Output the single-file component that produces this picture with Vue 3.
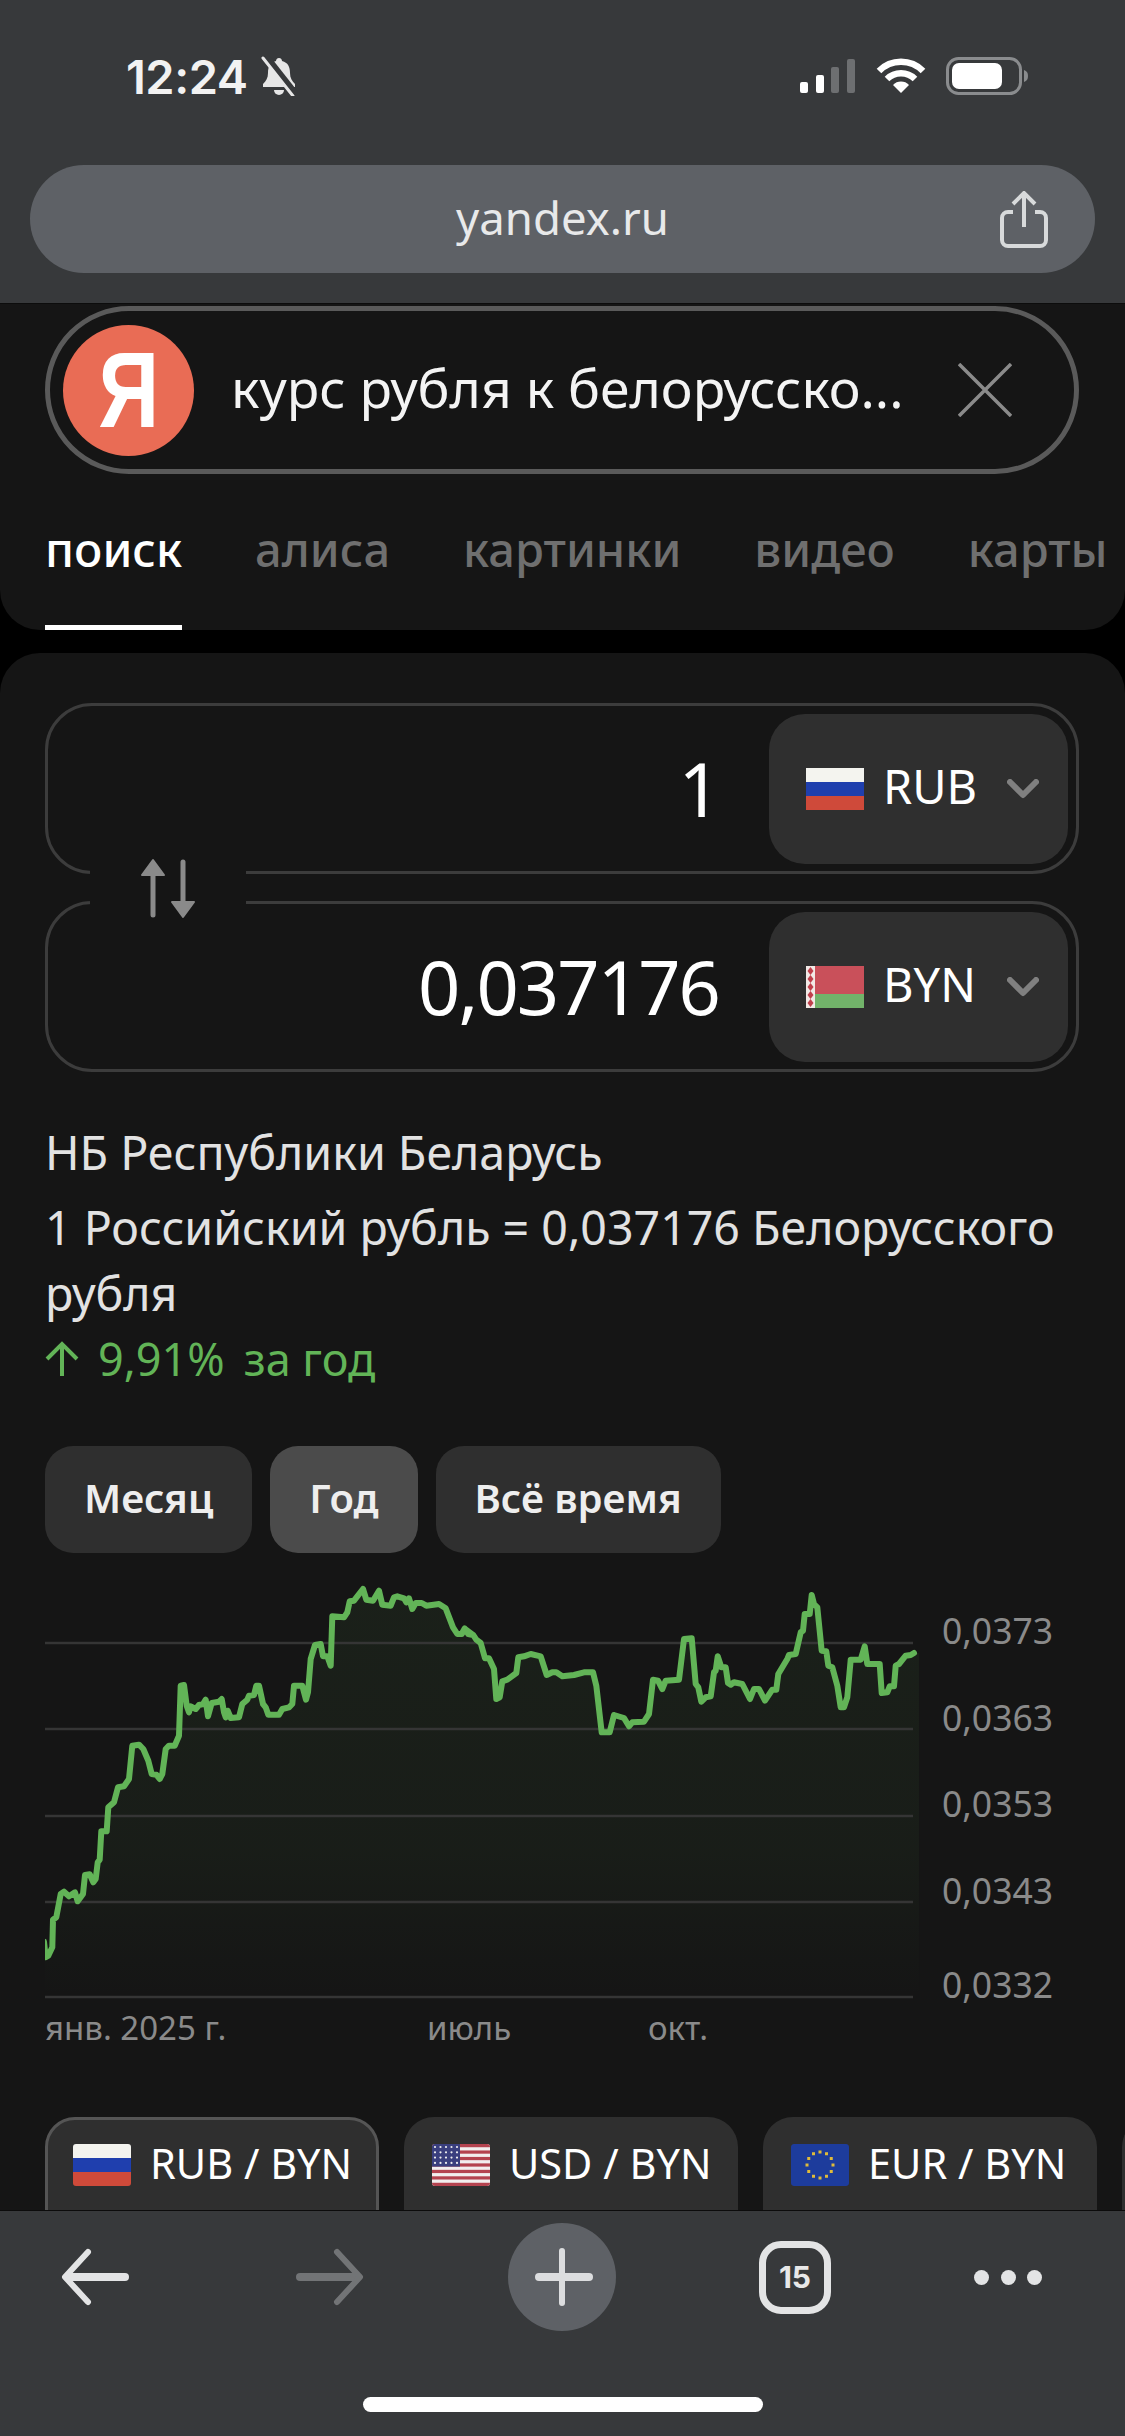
<template>
  <div class="phone">
    <header class="top-bar">
      <div class="status">
        <div class="status-left">
          <span class="time">12:24</span>
          <svg class="bell" width="38" height="40" viewBox="0 0 38 40">
            <path d="M19 2c2 0 3 1.500 3 3 6 1.500 8 6 8 12 0 5 2 8 5 11v3H3v-3c3-3 5-6 5-11 0-6 2-10.500 8-12 0-1.500 1-3 3-3z" fill="#e6e6e6" />
            <path d="M14 34a5 5 0 0 0 10 0z" fill="#e6e6e6" />
            <path d="M6 0l30 38" stroke="#37393b" stroke-width="6" />
            <path d="M3 2l30 38" stroke="#e6e6e6" stroke-width="3" stroke-linecap="round" />
          </svg>
        </div>
        <div class="status-right">
          <svg width="56" height="34" viewBox="0 0 56 34">
            <rect x="0" y="23" width="8" height="11" rx="2" fill="#fff" />
            <rect x="16" y="16" width="8" height="18" rx="2" fill="#fff" />
            <rect x="31" y="8" width="8" height="26" rx="2" fill="#6d6f71" />
            <rect x="47" y="0" width="8" height="34" rx="2" fill="#6d6f71" />
          </svg>
          <svg width="50" height="36" viewBox="0 0 50 36">
            <path d="M3 13a31 31 0 0 1 44 0" fill="none" stroke="#fff" stroke-width="6.500" />
            <path d="M11 21a20 20 0 0 1 28 0" fill="none" stroke="#fff" stroke-width="6.500" />
            <path d="M25 35l-8-8a11 11 0 0 1 16 0z" fill="#fff" />
          </svg>
          <svg width="82" height="38" viewBox="0 0 82 38">
            <rect x="1.500" y="1.500" width="73" height="35" rx="11" fill="none" stroke="#8a8c8e" stroke-width="3" />
            <rect x="6" y="6" width="50" height="26" rx="7" fill="#fff" />
            <path d="M78 13c3 1 4 3 4 6s-1 5-4 6z" fill="#8a8c8e" />
          </svg>
        </div>
      </div>
      <div class="url-pill">
        <span>yandex.ru</span>
        <svg class="share" width="50" height="58" viewBox="0 0 50 58">
          <path d="M14 21H9a6 6 0 0 0-6 6v22a6 6 0 0 0 6 6h32a6 6 0 0 0 6-6V27a6 6 0 0 0-6-6h-5" fill="none" stroke="#d8dadb" stroke-width="4" />
          <path d="M25 36V3M14 13L25 2l11 11" fill="none" stroke="#d8dadb" stroke-width="4" />
        </svg>
      </div>
    </header>

    <main class="content">
      <section class="search-card">
        <div class="search-box">
          <div class="logo"><span>Я</span></div>
          <div class="query">курс рубля к белорусско...</div>
          <svg width="54" height="54" viewBox="0 0 54 54">
            <path d="M1 1l52 52M53 1L1 53" stroke="#8a8a8a" stroke-width="3.500" />
          </svg>
        </div>
        <nav class="tabs">
          <a v-for="(t, i) in tabs" :key="t" class="tab" :class="{ active: i === 0 }">{{ t }}</a>
        </nav>
      </section>

      <section class="rate-card">
        <div class="converter">
          <div class="field">
            <span class="amount">1</span>
            <div class="select">
              <svg class="flag" width="58" height="42" viewBox="0 0 58 42">
                <rect width="58" height="14" fill="#f4f4ef" />
                <rect y="14" width="58" height="14" fill="#1f3fae" />
                <rect y="28" width="58" height="14" fill="#cf4a3a" />
              </svg>
              <span class="code">RUB</span>
              <svg class="chevron" width="32" height="20" viewBox="0 0 32 20">
                <path d="M3 3l13 13L29 3" fill="none" stroke="#808080" stroke-width="6" stroke-linecap="round" stroke-linejoin="round" />
              </svg>
            </div>
          </div>
          <div class="field">
            <span class="amount">0,037176</span>
            <div class="select">
              <svg class="flag" width="58" height="42" viewBox="0 0 58 42">
                <rect width="58" height="28" fill="#c9505a" />
                <rect y="28" width="58" height="14" fill="#72b36a" />
                <rect width="9" height="42" fill="#f2e9e6" />
                <path v-for="n in 5" :key="n" :d="'M4.500 ' + (n * 8 - 7) + 'l3 4-3 4-3-4z'" fill="#c0404c" />
              </svg>
              <span class="code">BYN</span>
              <svg class="chevron" width="32" height="20" viewBox="0 0 32 20">
                <path d="M3 3l13 13L29 3" fill="none" stroke="#808080" stroke-width="6" stroke-linecap="round" stroke-linejoin="round" />
              </svg>
            </div>
          </div>
          <!-- разрыв рамки под кнопкой обмена -->
          <div class="swap">
            <svg width="62" height="62" viewBox="0 0 62 62">
              <path d="M16 58V14" stroke="#8a8a8a" stroke-width="5" stroke-linecap="round" />
              <path d="M16 3L27 18H5z" fill="#8a8a8a" stroke="#8a8a8a" stroke-width="2" stroke-linejoin="round" />
              <path d="M46 5V48" stroke="#8a8a8a" stroke-width="5" stroke-linecap="round" />
              <path d="M46 60L35 45h22z" fill="#8a8a8a" stroke="#8a8a8a" stroke-width="2" stroke-linejoin="round" />
            </svg>
          </div>
        </div>

        <div class="info">
          <div class="source">НБ Республики Беларусь</div>
          <div>1 Российский рубль = 0,037176 Белорусского рубля</div>
          <div class="change">
            <svg width="34" height="36" viewBox="0 0 34 36">
              <path d="M17 35V3M2 18L17 3l15 15" fill="none" stroke="#62b457" stroke-width="4" />
            </svg>
            <span>9,91%</span>
            <span>за год</span>
          </div>
        </div>

        <div class="periods">
          <button v-for="p in periods" :key="p" class="period" :class="{ active: p === 'Год' }">{{ p }}</button>
        </div>

        <svg class="chart" width="1033" height="480" viewBox="46 0 1033 480">
          <defs>
            <linearGradient id="area" x1="0" y1="0" x2="0" y2="1">
              <stop offset="0" stop-color="#62b457" stop-opacity="0.07" />
              <stop offset="0.65" stop-color="#62b457" stop-opacity="0.05" />
              <stop offset="1" stop-color="#62b457" stop-opacity="0" />
            </linearGradient>
          </defs>
          <path :d="areaPath" fill="url(#area)" />
          <line v-for="y in gridLines" :key="y" x1="45" x2="914" :y1="y" :y2="y" stroke="#353535" stroke-width="2.500" />
          <polyline :points="linePoints" fill="none" stroke="#62b457" stroke-width="6" stroke-linejoin="round" stroke-linecap="round" />
          <text v-for="l in yLabels" :key="l.text" x="943" :y="l.y + 13" class="axis">{{ l.text }}</text>
          <text x="46" y="471" class="axis small">янв. 2025 г.</text>
          <text x="428" y="471" class="axis small">июль</text>
          <text x="649" y="471" class="axis small">окт.</text>
        </svg>

        <div class="pairs">
          <div class="pair selected">
            <svg class="flag" width="58" height="42" viewBox="0 0 58 42">
              <rect width="58" height="14" fill="#f4f4ef" />
              <rect y="14" width="58" height="14" fill="#1f3fae" />
              <rect y="28" width="58" height="14" fill="#cf4a3a" />
            </svg>
            <span>RUB / BYN</span>
          </div>
          <div class="pair">
            <svg class="flag" width="58" height="42" viewBox="0 0 58 42">
              <rect width="58" height="42" fill="#f2eeee" />
              <rect v-for="n in 7" :key="n" :y="(n - 1) * 6.460" width="58" height="3.230" fill="#b4434f" />
              <rect width="28" height="22.600" fill="#3a3f7e" />
              <circle v-for="(s, i) in usStars" :key="i" :cx="s[0]" :cy="s[1]" r="1.100" fill="#eee" />
            </svg>
            <span>USD / BYN</span>
          </div>
          <div class="pair">
            <svg class="flag" width="58" height="42" viewBox="0 0 58 42">
              <rect width="58" height="42" rx="2" fill="#1d3c9c" />
              <rect v-for="(s, i) in euStars" :key="i" :x="s[0] - 1.500" :y="s[1] - 1.500" width="3" height="3" fill="#e0bb3a" />
            </svg>
            <span>EUR / BYN</span>
          </div>
          <div class="pair"></div>
        </div>
      </section>
    </main>

    <footer class="bottom-bar">
      <div class="nav">
        <svg class="nav-item" width="108" height="108" viewBox="0 0 108 108">
          <path d="M83 54H26" stroke="#e3e4e5" stroke-width="8" stroke-linecap="round" />
          <path d="M46 29L23 54 46 79" fill="none" stroke="#e3e4e5" stroke-width="6" stroke-linecap="round" stroke-linejoin="round" />
        </svg>
        <svg class="nav-item" width="108" height="108" viewBox="0 0 108 108">
          <path d="M25 54H82" stroke="#727476" stroke-width="8" stroke-linecap="round" />
          <path d="M62 29L85 54 62 79" fill="none" stroke="#727476" stroke-width="6" stroke-linecap="round" stroke-linejoin="round" />
        </svg>
        <div class="plus">
          <svg width="108" height="108" viewBox="0 0 108 108">
            <path d="M31 54H81" stroke="#dcdddf" stroke-width="8" stroke-linecap="round" />
            <path d="M54 28V80" stroke="#dcdddf" stroke-width="6" stroke-linecap="round" />
          </svg>
        </div>
        <div class="nav-item tab-slot"><div class="tab-count">15</div></div>
        <div class="dots"><i></i><i></i><i></i></div>
      </div>
      <div class="home-indicator"></div>
    </footer>
  </div>
</template>

<script setup>
const tabs = ['поиск', 'алиса', 'картинки', 'видео', 'карты']
const periods = ['Месяц', 'Год', 'Всё время']

// точки графика сняты с увеличенных кропов (масштаб 3x)
const leftPart = [
  [135, 1118], [140, 1165], [148, 1160], [160, 1135], [162, 1052], [172, 1045], [185, 975], [195, 968], [210, 982],
  [228, 970], [236, 997], [252, 975], [258, 918], [272, 916], [283, 940], [290, 930], [296, 880], [302, 872],
  [307, 787], [323, 787], [328, 715], [345, 700], [357, 655], [375, 652], [390, 630], [400, 530], [420, 527],
  [433, 540], [448, 575], [458, 615], [472, 617], [482, 630], [490, 615], [500, 540], [510, 530], [527, 530],
  [540, 500], [545, 350], [555, 348], [563, 410], [570, 430], [575, 412], [590, 420], [600, 408], [612, 405],
  [620, 392], [627, 442], [638, 402], [660, 398], [668, 390], [675, 430], [680, 445], [686, 425], [695, 447],
  [720, 445], [730, 405], [745, 392], [750, 380], [765, 378], [772, 350], [780, 350], [792, 405], [800, 415],
  [808, 437], [840, 437], [850, 420], [870, 415], [880, 405], [885, 350], [910, 350], [921, 392], [927, 370],
  [935, 270], [948, 228], [965, 225], [972, 262], [985, 262], [995, 290], [1000, 142], [1035, 145], [1045, 130],
  [1052, 97], [1065, 95], [1092, 60], [1102, 92], [1122, 95], [1140, 65], [1150, 107], [1175, 110], [1185, 85],
  [1195, 82], [1215, 88], [1222, 100], [1230, 88], [1240, 120], [1250, 102], [1268, 102], [1282, 110], [1320, 105],
  [1340, 118], [1362, 175], [1375, 195], [1388, 195], [1397, 178], [1408, 195], [1422, 198],
]
const rightPart = [
  [18, 180], [28, 195], [42, 197], [52, 212], [65, 222], [78, 268], [90, 268], [105, 300], [112, 390], [122, 385],
  [130, 337], [145, 332], [172, 312], [178, 265], [195, 262], [215, 255], [245, 262], [263, 318], [280, 310],
  [292, 310], [310, 322], [345, 318], [375, 310], [402, 310], [412, 350], [428, 490], [452, 490], [465, 438],
  [495, 447], [510, 472], [520, 460], [555, 458], [570, 435], [582, 332], [597, 335], [610, 360], [620, 335],
  [660, 332], [675, 210], [698, 208], [710, 345], [718, 355], [727, 398], [740, 385], [755, 382], [765, 310],
  [770, 305], [776, 262], [787, 295], [800, 295], [807, 342], [815, 347], [825, 340], [850, 345], [873, 390],
  [885, 360], [900, 360], [918, 395], [940, 362], [952, 362], [958, 315], [985, 270], [990, 258], [1010, 255],
  [1025, 190], [1032, 185], [1037, 135], [1052, 135], [1058, 78], [1065, 105], [1075, 115], [1088, 245], [1102, 247],
  [1108, 290], [1120, 295], [1135, 350], [1145, 415], [1155, 415], [1165, 385], [1175, 272], [1205, 272], [1217, 232],
  [1225, 285], [1262, 285], [1268, 372], [1285, 370], [1292, 352], [1305, 352], [1310, 290], [1320, 285], [1340, 260],
  [1355, 258], [1365, 252],
]

const points = [
  ...leftPart.map(([x, y]) => [x / 3, y / 3]),
  ...rightPart.map(([x, y]) => [460 + x / 3, y / 3]),
]
const linePoints = points.map(p => p.map(v => v.toFixed(1)).join(',')).join(' ')
const lastY = points[points.length - 1][1]
const areaPath = 'M' + linePoints.replaceAll(' ', 'L') + `L920,${lastY}L920,428L45,428Z`

const gridLines = [74, 160, 247, 333, 428]
const yLabels = [
  { text: '0,0373', y: 62 },
  { text: '0,0363', y: 149 },
  { text: '0,0353', y: 235 },
  { text: '0,0343', y: 322 },
  { text: '0,0332', y: 416 },
]

const usStars = []
for (let r = 0; r < 4; r++) {
  for (let c = 0; c < 5; c++) usStars.push([3 + c * 5.500, 3 + r * 5.300])
}
const euStars = []
for (let i = 0; i < 12; i++) {
  const a = (i / 12) * Math.PI * 2
  euStars.push([29 + Math.cos(a) * 13, 21 + Math.sin(a) * 13])
}
</script>

<style>
html, body {
  margin: 0;
  background: #000;
}
</style>

<style scoped>
.phone {
  width: 1125px;
  height: 2436px;
  display: flex;
  flex-direction: column;
  overflow: hidden;
  background: #000;
  color: #fff;
  font-family: "Noto Sans", "Liberation Sans", sans-serif;
}

.top-bar {
  height: 304px;
  box-sizing: border-box;
  flex-shrink: 0;
  background: #37393b;
  border-bottom: 1px solid #0c0c0c;
}

.status {
  height: 152px;
  box-sizing: border-box;
  padding: 0 97px 0 126px;
  display: flex;
  align-items: center;
  justify-content: space-between;
}

.status-left {
  display: flex;
  align-items: center;
  gap: 12px;
}

.status-right {
  display: flex;
  align-items: center;
  gap: 20px;
}

.time {
  font-family: Inter, sans-serif;
  font-size: 47px;
  font-weight: 600;
  letter-spacing: -0.5px;
  color: #f2f2f2;
}

.url-pill {
  position: relative;
  height: 108px;
  box-sizing: border-box;
  margin: 13px 30px 0;
  padding-bottom: 5px;
  display: flex;
  align-items: center;
  justify-content: center;
  border-radius: 54px;
  background: #5e6166;
  font-size: 45.5px;
  color: #e8e9ea;
}

.share {
  position: absolute;
  right: 46px;
  top: 26px;
}

.content {
  flex: 1;
  min-height: 0;
  overflow: hidden;
}

.search-card {
  height: 326px;
  box-sizing: border-box;
  padding: 2px 0 0 45px;
  background: #151515;
  border-radius: 0 0 40px 40px;
}

.search-box {
  width: 1034px;
  height: 168px;
  box-sizing: border-box;
  display: flex;
  align-items: center;
  padding: 0 62px 0 13px;
  border: 5px solid #5a5a5a;
  border-radius: 84px;
}

.logo {
  width: 131px;
  height: 131px;
  flex-shrink: 0;
  display: flex;
  align-items: center;
  justify-content: center;
  border-radius: 50%;
  background: #e96c55;
}

.logo span {
  font-family: "Liberation Sans", sans-serif;
  font-size: 108px;
  font-weight: 700;
  line-height: 1;
  transform: scaleX(0.78);
}

.query {
  flex: 1;
  margin: 0 0 6px 37px;
  font-size: 53.5px;
  white-space: nowrap;
  color: #f4f4f4;
}

.tabs {
  display: flex;
  gap: 73px;
  margin-top: 45px;
  white-space: nowrap;
}

.tab {
  height: 111px;
  box-sizing: border-box;
  font-size: 47px;
  line-height: 60px;
  font-weight: 500;
  color: #6f6f6f;
}

.tab.active {
  color: #fff;
  border-bottom: 5px solid #fff;
}

.rate-card {
  margin-top: 23px;
  height: 1600px;
  box-sizing: border-box;
  padding: 50px 46px 0 45px;
  background: #151515;
  border-radius: 40px 40px 0 0;
}

.converter {
  position: relative;
  display: flex;
  flex-direction: column;
  gap: 27px;
}

.field {
  height: 171px;
  box-sizing: border-box;
  display: flex;
  align-items: center;
  justify-content: flex-end;
  padding-right: 8px;
  border: 3px solid #3c3c3c;
  border-radius: 47px;
}

.amount {
  margin-right: 50px;
  font-size: 74px;
  letter-spacing: -1.9px;
  color: #fff;
}

.select {
  width: 299px;
  height: 150px;
  box-sizing: border-box;
  flex-shrink: 0;
  display: flex;
  align-items: center;
  padding: 0 29px 0 37px;
  border-radius: 36px;
  background: #2f2f2f;
}

.code {
  margin: 0 0 5px 19px;
  font-size: 47px;
}

.chevron {
  margin-left: auto;
}

.swap {
  position: absolute;
  left: 45px;
  top: 160px;
  width: 156px;
  height: 56px;
  display: flex;
  align-items: center;
  justify-content: center;
  background: #151515;
}

.swap svg {
  margin-top: -6px;
}

.info {
  margin-top: 47px;
  font-size: 46.5px;
  line-height: 66px;
  color: #e2e2e2;
}

.source {
  margin-bottom: 9px;
}

.change {
  display: flex;
  align-items: center;
  gap: 19px;
  font-size: 45px;
  color: #62b457;
}

.periods {
  display: flex;
  gap: 18px;
  margin-top: 54px;
}

.period {
  height: 107px;
  padding: 0 39px 5px;
  border: none;
  border-radius: 28px;
  background: #2f2f2f;
  color: #eee;
  font-family: inherit;
  font-size: 40px;
  font-weight: 600;
}

.period.active {
  background: #4b4b4b;
}

.chart {
  display: block;
  margin-top: 16px;
}

.axis {
  font-size: 35.5px;
  fill: #8a8a8a;
}

.axis.small {
  font-size: 33px;
}

.pairs {
  display: flex;
  gap: 25px;
  margin-top: 68px;
  width: 1200px;
}

.pair {
  width: 334px;
  height: 140px;
  box-sizing: border-box;
  flex-shrink: 0;
  display: flex;
  align-items: flex-start;
  gap: 19px;
  padding: 24px 0 0 25px;
  border: 3px solid transparent;
  border-radius: 30px;
  background: #2f2f2f;
  font-size: 41.5px;
  line-height: 38px;
}

.pair.selected {
  border-color: #555;
}

.pair .flag {
  flex-shrink: 0;
  border-radius: 3px;
}

.bottom-bar {
  height: 226px;
  box-sizing: border-box;
  flex-shrink: 0;
  background: #37393b;
  border-top: 1px solid #0c0c0c;
}

.nav {
  display: flex;
  align-items: center;
  gap: 125px;
  padding: 12px 0 0 42px;
}

.nav-item {
  flex-shrink: 0;
}

.plus {
  width: 108px;
  height: 108px;
  border-radius: 50%;
  background: #5e6166;
}

.tab-slot {
  width: 108px;
  display: flex;
  justify-content: center;
}

.tab-count {
  width: 72px;
  height: 73px;
  box-sizing: border-box;
  display: flex;
  align-items: center;
  justify-content: center;
  border: 7px solid #e3e4e5;
  border-radius: 22px;
  font-family: Inter, sans-serif;
  font-size: 30px;
  font-weight: 700;
  color: #e8e8e8;
}

.dots {
  width: 68px;
  display: flex;
  justify-content: space-between;
}

.dots i {
  width: 15px;
  height: 15px;
  border-radius: 50%;
  background: #e3e4e5;
}

.home-indicator {
  width: 400px;
  height: 15px;
  margin: 66px auto 0;
  border-radius: 8px;
  background: #fff;
}
</style>
